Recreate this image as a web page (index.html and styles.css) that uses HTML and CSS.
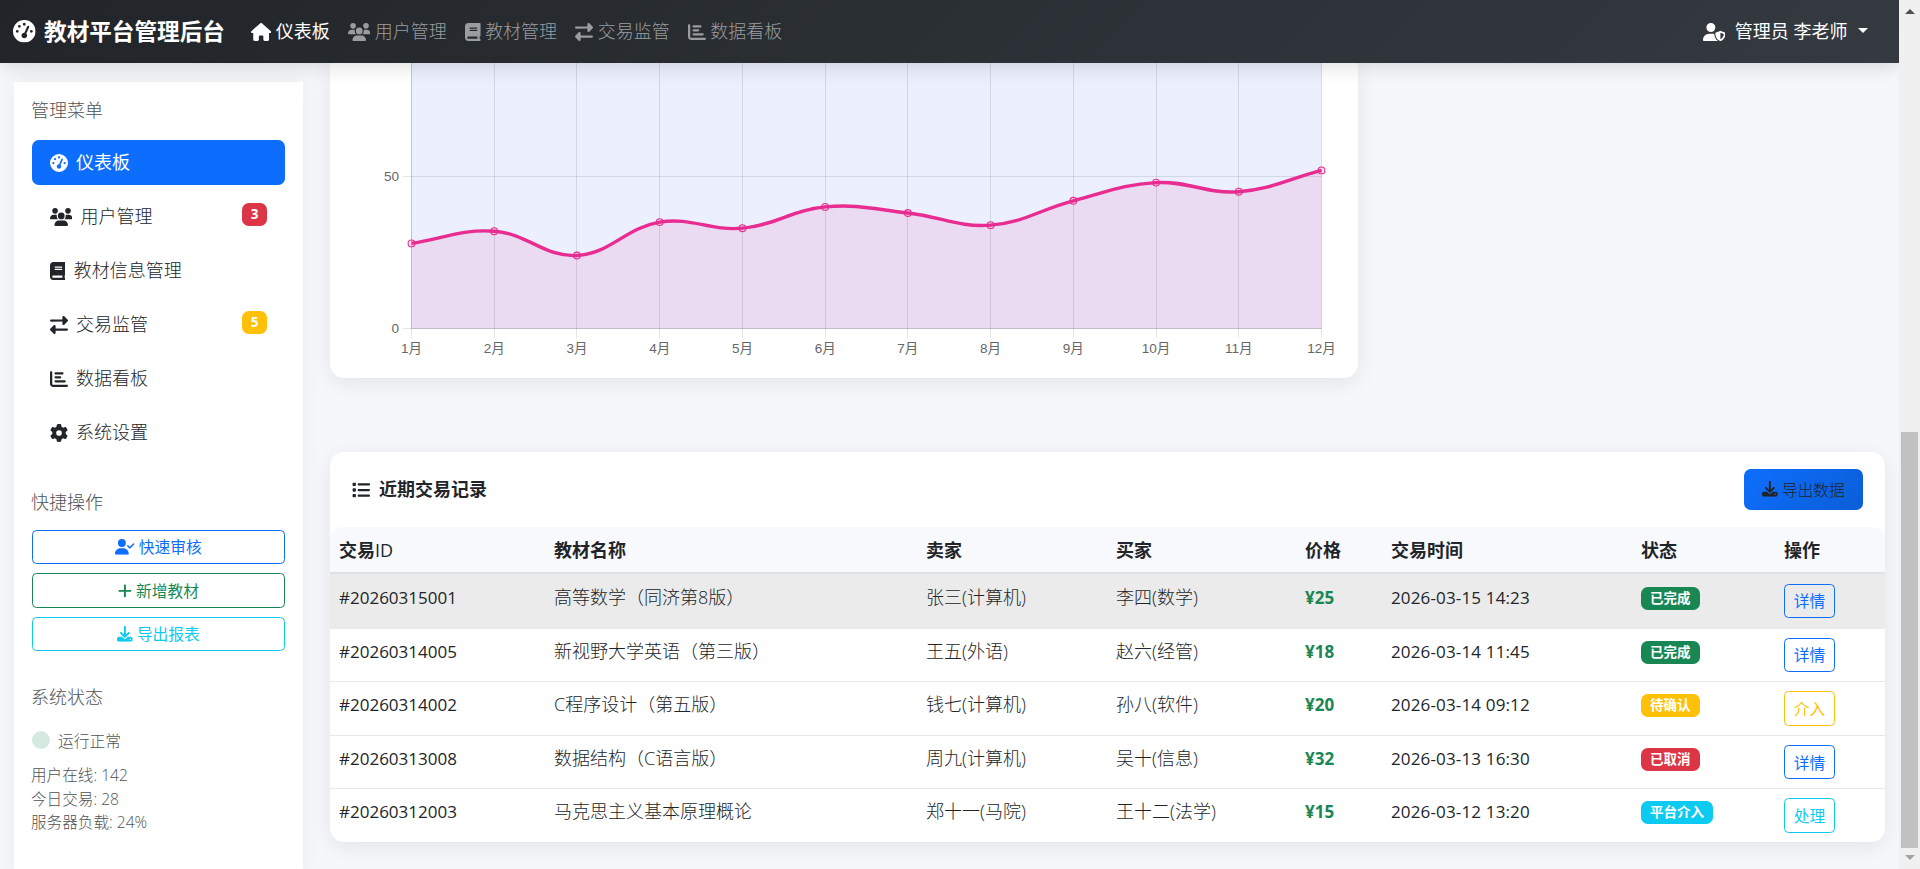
FILE: index.html
```html
<!DOCTYPE html>
<html lang="zh-CN">
<head>
    <meta charset="UTF-8">
    <meta name="viewport" content="width=device-width, initial-scale=1.0">
    <title>教材平台管理后台</title>
    <link rel="stylesheet" href="styles.css">
</head>
<body>

    <!-- Icon set -->
    <svg class="icon-set" aria-hidden="true">
        <symbol id="i-gauge" viewBox="0 0 512 512"><path d="M0 256a256 256 0 1 1 512 0A256 256 0 1 1 0 256zM288 96a32 32 0 1 0 -64 0 32 32 0 1 0 64 0zM256 416c35.3 0 64-28.7 64-64c0-17.4-6.9-33.1-18.1-44.6L366 161.7c5.3-12.1-.2-26.3-12.3-31.6s-26.3 .2-31.6 12.3L257.9 288c-.6 0-1.3 0-1.9 0c-35.3 0-64 28.7-64 64s28.7 64 64 64zM176 144a32 32 0 1 0 -64 0 32 32 0 1 0 64 0zM96 288a32 32 0 1 0 0-64 32 32 0 1 0 0 64zm352-32a32 32 0 1 0 -64 0 32 32 0 1 0 64 0z"/></symbol>
        <symbol id="i-home" viewBox="0 0 576 512"><path d="M575.8 255.5c0 18-15 32.1-32 32.1l-32 0 .7 160.2c0 2.7-.2 5.4-.5 8.1l0 16.2c0 22.1-17.9 40-40 40l-16 0c-1.1 0-2.2 0-3.3-.1c-1.4 .1-2.8 .1-4.2 .1L416 512l-24 0c-22.1 0-40-17.9-40-40l0-24 0-64c0-17.7-14.3-32-32-32l-64 0c-17.7 0-32 14.3-32 32l0 64 0 24c0 22.1-17.9 40-40 40l-24 0-31.9 0c-1.5 0-3-.1-4.5-.2c-1.2 .1-2.4 .2-3.6 .2l-16 0c-22.1 0-40-17.9-40-40l0-112c0-.9 0-1.9 .1-2.8l0-69.7-32 0c-18 0-32-14-32-32.1c0-9 3-17 10-24L266.4 8c7-7 15-8 22-8s15 2 21 7L564.8 231.5c8 7 12 15 11 24z"/></symbol>
        <symbol id="i-users" viewBox="0 0 640 512"><path d="M144 0a80 80 0 1 1 0 160A80 80 0 1 1 144 0zM512 0a80 80 0 1 1 0 160A80 80 0 1 1 512 0zM0 298.7C0 239.8 47.8 192 106.7 192l42.7 0c15.9 0 31 3.5 44.6 9.7c-1.3 7.2-1.9 14.7-1.9 22.3c0 38.2 16.8 72.5 43.3 96c-.2 0-.4 0-.7 0L21.3 320C9.6 320 0 310.4 0 298.7zM405.3 320c-.2 0-.4 0-.7 0c26.6-23.5 43.3-57.8 43.3-96c0-7.6-.7-15-1.9-22.3c13.6-6.3 28.7-9.7 44.6-9.7l42.7 0C592.2 192 640 239.8 640 298.7c0 11.8-9.6 21.3-21.3 21.3l-213.3 0zM224 224a96 96 0 1 1 192 0 96 96 0 1 1 -192 0zM128 485.3C128 411.7 187.7 352 261.3 352l117.3 0C452.3 352 512 411.7 512 485.3c0 14.7-11.9 26.7-26.7 26.7l-330.7 0c-14.7 0-26.7-11.9-26.7-26.7z"/></symbol>
        <symbol id="i-book" viewBox="0 0 448 512"><path d="M96 0C43 0 0 43 0 96L0 416c0 53 43 96 96 96l288 0 32 0c17.7 0 32-14.3 32-32s-14.3-32-32-32l0-64c17.7 0 32-14.3 32-32l0-320c0-17.7-14.3-32-32-32L384 0 96 0zm0 384l256 0 0 64L96 448c-17.7 0-32-14.3-32-32s14.3-32 32-32zm32-240c0-8.8 7.2-16 16-16l192 0c8.8 0 16 7.2 16 16s-7.2 16-16 16l-192 0c-8.8 0-16-7.2-16-16zm16 48l192 0c8.8 0 16 7.2 16 16s-7.2 16-16 16l-192 0c-8.8 0-16-7.2-16-16s7.2-16 16-16z"/></symbol>
        <symbol id="i-exchange" viewBox="0 0 512 512"><path d="M32 96l320 0 0-64c0-12.9 7.8-24.6 19.8-29.6s25.7-2.2 34.9 6.9l96 96c6 6 9.4 14.1 9.4 22.6s-3.4 16.6-9.4 22.6l-96 96c-9.2 9.2-22.9 11.9-34.9 6.9s-19.8-16.6-19.8-29.6l0-64L32 160c-17.7 0-32-14.3-32-32s14.3-32 32-32zM480 352c17.7 0 32 14.3 32 32s-14.3 32-32 32l-320 0 0 64c0 12.9-7.8 24.6-19.8 29.6s-25.7 2.2-34.9-6.9l-96-96c-6-6-9.4-14.1-9.4-22.6s3.4-16.6 9.4-22.6l96-96c9.2-9.2 22.9-11.9 34.9-6.9s19.8 16.6 19.8 29.6l0 64 320 0z"/></symbol>
        <symbol id="i-chart" viewBox="0 0 512 512"><path d="M32 32c17.7 0 32 14.3 32 32l0 336c0 8.8 7.2 16 16 16l400 0c17.7 0 32 14.3 32 32s-14.3 32-32 32L80 480c-44.2 0-80-35.8-80-80L0 64C0 46.3 14.3 32 32 32zm96 64c0-17.7 14.3-32 32-32l192 0c17.7 0 32 14.3 32 32s-14.3 32-32 32l-192 0c-17.7 0-32-14.3-32-32zm32 80l128 0c17.7 0 32 14.3 32 32s-14.3 32-32 32l-128 0c-17.7 0-32-14.3-32-32s14.3-32 32-32zm0 112l256 0c17.7 0 32 14.3 32 32s-14.3 32-32 32l-256 0c-17.7 0-32-14.3-32-32s14.3-32 32-32z"/></symbol>
        <symbol id="i-cog" viewBox="0 0 512 512"><path d="M495.9 166.6c3.2 8.7 .5 18.4-6.4 24.6l-43.3 39.4c1.1 8.3 1.7 16.8 1.7 25.4s-.6 17.1-1.7 25.4l43.3 39.4c6.9 6.2 9.6 15.9 6.4 24.6c-4.4 11.9-9.7 23.3-15.8 34.3l-4.7 8.1c-6.6 11-14 21.4-22.1 31.2c-5.9 7.2-15.7 9.6-24.5 6.8l-55.7-17.7c-13.4 10.3-28.2 18.9-44 25.4l-12.5 57.1c-2 9.1-9 16.3-18.2 17.8c-13.8 2.3-28 3.5-42.5 3.5s-28.7-1.2-42.5-3.5c-9.2-1.5-16.2-8.7-18.2-17.8l-12.5-57.1c-15.8-6.5-30.6-15.1-44-25.4L83.1 425.9c-8.8 2.8-18.6 .3-24.5-6.8c-8.1-9.8-15.5-20.2-22.1-31.2l-4.7-8.1c-6.1-11-11.4-22.4-15.8-34.3c-3.2-8.7-.5-18.4 6.4-24.6l43.3-39.4C64.6 273.1 64 264.6 64 256s.6-17.1 1.7-25.4L22.4 191.2c-6.9-6.2-9.6-15.9-6.4-24.6c4.4-11.9 9.7-23.3 15.8-34.3l4.7-8.1c6.6-11 14-21.4 22.1-31.2c5.9-7.2 15.7-9.6 24.5-6.8l55.7 17.7c13.4-10.3 28.2-18.9 44-25.4l12.5-57.1c2-9.1 9-16.3 18.2-17.8C227.3 1.2 241.5 0 256 0s28.7 1.2 42.5 3.5c9.2 1.5 16.2 8.7 18.2 17.8l12.5 57.1c15.8 6.5 30.6 15.1 44 25.4l55.7-17.7c8.8-2.8 18.6-.3 24.5 6.8c8.1 9.8 15.5 20.2 22.1 31.2l4.7 8.1c6.1 11 11.4 22.4 15.8 34.3zM256 336a80 80 0 1 0 0-160 80 80 0 1 0 0 160z"/></symbol>
        <symbol id="i-user-check" viewBox="0 0 640 512"><path d="M96 128a128 128 0 1 1 256 0A128 128 0 1 1 96 128zM0 482.3C0 383.8 79.8 304 178.3 304l91.4 0C368.2 304 448 383.8 448 482.3c0 16.4-13.3 29.7-29.7 29.7L29.7 512C13.3 512 0 498.7 0 482.3zM625 177L497 305c-9.4 9.4-24.6 9.4-33.9 0l-64-64c-9.4-9.4-9.4-24.6 0-33.9s24.6-9.4 33.9 0l47 47L591 143c9.4-9.4 24.6-9.4 33.9 0s9.4 24.6 0 33.9z"/></symbol>
        <symbol id="i-plus" viewBox="0 0 448 512"><path d="M256 80c0-17.7-14.3-32-32-32s-32 14.3-32 32l0 144L48 224c-17.7 0-32 14.3-32 32s14.3 32 32 32l144 0 0 144c0 17.7 14.3 32 32 32s32-14.3 32-32l0-144 144 0c17.7 0 32-14.3 32-32s-14.3-32-32-32l-144 0 0-144z"/></symbol>
        <symbol id="i-download" viewBox="0 0 512 512"><path d="M288 32c0-17.7-14.3-32-32-32s-32 14.3-32 32l0 242.7-73.4-73.4c-12.5-12.5-32.8-12.5-45.3 0s-12.5 32.8 0 45.3l128 128c12.5 12.5 32.8 12.5 45.3 0l128-128c12.5-12.5 12.5-32.8 0-45.3s-32.8-12.5-45.3 0L288 274.7 288 32zM64 352c-35.3 0-64 28.7-64 64l0 32c0 35.3 28.7 64 64 64l384 0c35.3 0 64-28.7 64-64l0-32c0-35.3-28.7-64-64-64l-101.5 0-45.3 45.3c-25 25-65.5 25-90.5 0L165.5 352 64 352zm368 56a24 24 0 1 1 0 48 24 24 0 1 1 0-48z"/></symbol>
        <symbol id="i-user-shield" viewBox="0 0 640 512"><path d="M224 256A128 128 0 1 0 224 0a128 128 0 1 0 0 256zm-45.7 48C79.8 304 0 383.8 0 482.3C0 498.7 13.3 512 29.7 512l388.6 0c1.8 0 3.5-.2 5.3-.5c-76.3-55.1-99.8-141-103.1-200.2c-16.1-4.8-33.1-7.3-50.7-7.3l-91.4 0zm308.8-78.3l-120 48C358 277.4 352 286.2 352 296c0 63.3 25.9 168.8 134.8 214.2c5.9 2.5 12.6 2.5 18.5 0C614.1 464.8 640 359.3 640 296c0-9.8-6-18.6-15.1-22.3l-120-48c-5.7-2.3-12.1-2.3-17.8 0zM591.4 312c-3.9 50.7-27.2 116.7-95.4 149.7l0-187.8L591.4 312z"/></symbol>
        <symbol id="i-list" viewBox="0 0 512 512"><path d="M40 48C26.7 48 16 58.7 16 72l0 48c0 13.3 10.7 24 24 24l48 0c13.3 0 24-10.7 24-24l0-48c0-13.3-10.7-24-24-24L40 48zM192 64c-17.7 0-32 14.3-32 32s14.3 32 32 32l288 0c17.7 0 32-14.3 32-32s-14.3-32-32-32L192 64zm0 160c-17.7 0-32 14.3-32 32s14.3 32 32 32l288 0c17.7 0 32-14.3 32-32s-14.3-32-32-32l-288 0zm0 160c-17.7 0-32 14.3-32 32s14.3 32 32 32l288 0c17.7 0 32-14.3 32-32s-14.3-32-32-32l-288 0zM16 232l0 48c0 13.3 10.7 24 24 24l48 0c13.3 0 24-10.7 24-24l0-48c0-13.3-10.7-24-24-24l-48 0c-13.3 0-24 10.7-24 24zM40 368c-13.3 0-24 10.7-24 24l0 48c0 13.3 10.7 24 24 24l48 0c13.3 0 24-10.7 24-24l0-48c0-13.3-10.7-24-24-24l-48 0z"/></symbol>
    </svg>

    <div class="page">
        <!-- Navbar -->
        <nav class="navbar">
            <a class="brand"><svg class="icon"><use href="#i-gauge"/></svg>教材平台管理后台</a>
            <div class="nav-links">
                <a class="nav-link active"><svg class="icon wide-sm"><use href="#i-home"/></svg>仪表板</a>
                <a class="nav-link"><svg class="icon wide"><use href="#i-users"/></svg>用户管理</a>
                <a class="nav-link"><svg class="icon narrow"><use href="#i-book"/></svg>教材管理</a>
                <a class="nav-link"><svg class="icon"><use href="#i-exchange"/></svg>交易监管</a>
                <a class="nav-link"><svg class="icon"><use href="#i-chart"/></svg>数据看板</a>
            </div>
            <a class="admin"><svg class="icon wide"><use href="#i-user-shield"/></svg>管理员 李老师<span class="caret"></span></a>
        </nav>

        <div class="layout">
            <!-- Sidebar -->
            <aside class="sidebar">
                <h6 class="side-title">管理菜单</h6>
                <div class="menu">
                    <a class="menu-item active"><svg class="icon"><use href="#i-gauge"/></svg>仪表板</a>
                    <a class="menu-item"><svg class="icon wide"><use href="#i-users"/></svg>用户管理<span class="count red">3</span></a>
                    <a class="menu-item"><svg class="icon narrow"><use href="#i-book"/></svg>教材信息管理</a>
                    <a class="menu-item"><svg class="icon"><use href="#i-exchange"/></svg>交易监管<span class="count yellow">5</span></a>
                    <a class="menu-item"><svg class="icon"><use href="#i-chart"/></svg>数据看板</a>
                    <a class="menu-item"><svg class="icon"><use href="#i-cog"/></svg>系统设置</a>
                </div>

                <h6 class="side-title ops-title">快捷操作</h6>
                <div class="quick">
                    <button class="btn primary"><svg class="icon wide"><use href="#i-user-check"/></svg>快速审核</button>
                    <button class="btn success"><svg class="icon narrow"><use href="#i-plus"/></svg>新增教材</button>
                    <button class="btn info"><svg class="icon"><use href="#i-download"/></svg>导出报表</button>
                </div>

                <h6 class="side-title status-title">系统状态</h6>
                <div class="running"><span class="dot"></span>运行正常</div>
                <div class="stats">
                    <div>用户在线: 142</div>
                    <div>今日交易: 28</div>
                    <div>服务器负载: 24%</div>
                </div>
            </aside>

            <!-- Main content -->
            <main class="main">
                <section class="card chart-card">
                    <svg id="trend" class="chart" viewBox="0 0 1028 315"></svg>
                </section>

                <section class="card table-card">
                    <div class="card-head">
                        <h5 class="card-title"><svg class="icon"><use href="#i-list"/></svg>近期交易记录</h5>
                        <button class="export"><svg class="icon"><use href="#i-download"/></svg>导出数据</button>
                    </div>
                    <table class="table">
                        <colgroup>
                            <col class="c-id"><col class="c-book"><col class="c-seller"><col class="c-buyer">
                            <col class="c-price"><col class="c-time"><col class="c-status"><col class="c-op">
                        </colgroup>
                        <thead>
                            <tr><th>交易<span class="latin">ID</span></th><th>教材名称</th><th>卖家</th><th>买家</th><th>价格</th><th>交易时间</th><th>状态</th><th>操作</th></tr>
                        </thead>
                        <tbody>
                            <tr class="hovered">
                                <td class="num">#20260315001</td><td>高等数学（同济第8版）</td><td>张三(计算机)</td><td>李四(数学)</td><td class="price">¥25</td><td class="num time">2026-03-15 14:23</td>
                                <td><span class="badge green">已完成</span></td><td><button class="btn primary">详情</button></td>
                            </tr>
                            <tr>
                                <td class="num">#20260314005</td><td>新视野大学英语（第三版）</td><td>王五(外语)</td><td>赵六(经管)</td><td class="price">¥18</td><td class="num time">2026-03-14 11:45</td>
                                <td><span class="badge green">已完成</span></td><td><button class="btn primary">详情</button></td>
                            </tr>
                            <tr>
                                <td class="num">#20260314002</td><td>C程序设计（第五版）</td><td>钱七(计算机)</td><td>孙八(软件)</td><td class="price">¥20</td><td class="num time">2026-03-14 09:12</td>
                                <td><span class="badge yellow">待确认</span></td><td><button class="btn warning">介入</button></td>
                            </tr>
                            <tr>
                                <td class="num">#20260313008</td><td>数据结构（C语言版）</td><td>周九(计算机)</td><td>吴十(信息)</td><td class="price">¥32</td><td class="num time">2026-03-13 16:30</td>
                                <td><span class="badge red">已取消</span></td><td><button class="btn primary">详情</button></td>
                            </tr>
                            <tr>
                                <td class="num">#20260312003</td><td>马克思主义基本原理概论</td><td>郑十一(马院)</td><td>王十二(法学)</td><td class="price">¥15</td><td class="num time">2026-03-12 13:20</td>
                                <td><span class="badge cyan">平台介入</span></td><td><button class="btn info">处理</button></td>
                            </tr>
                        </tbody>
                    </table>
                </section>
            </main>
        </div>
    </div>

    <!-- Scroll bar -->
    <div class="scrollbar">
        <span class="arrow up"></span>
        <span class="thumb"></span>
        <span class="arrow down"></span>
    </div>

    <script src="script.js"></script>
</body>
</html>
```
FILE: styles.css
```css
* {
    margin: 0;
    padding: 0;
    box-sizing: border-box;
}

body {
    font-family: "Open Sans", "Noto Sans CJK SC", sans-serif;
    font-size: 18px;
    font-weight: 300;
    line-height: 27px;
    color: #212529;
    background-color: #f5f7fb;
    display: flex;
    height: 869px;
    overflow: hidden;
}

button {
    font-family: inherit;
    font-weight: inherit;
    cursor: pointer;
}

.icon-set {
    display: none;
}

.icon {
    width: 1em;
    height: 1em;
    fill: currentColor;
    flex-shrink: 0;
}

.icon.wide {
    width: 1.25em;
}

.icon.wide-sm {
    width: 1.125em;
}

.icon.narrow {
    width: 0.875em;
}

.page {
    flex: 1;
    min-width: 0;
    height: 869px;
    overflow: hidden;
}

/* Navbar */
.navbar {
    position: relative;
    z-index: 10;
    display: flex;
    align-items: center;
    height: 63px;
    padding: 0 31px 0 13px;
    background: linear-gradient(135deg, #212529 0%, #343a40 100%);
    box-shadow: 0 4px 18px rgba(0, 0, 0, 0.13);
    color: #fff;
}

.brand {
    display: flex;
    align-items: center;
    gap: 8.5px;
    font-size: 22.6px;
    font-weight: 700;
}

.nav-links {
    display: flex;
    gap: 18px;
    margin-left: 26px;
}

.nav-link {
    display: flex;
    align-items: center;
    gap: 4.6px;
    color: #9a9c9e;
}

.nav-link.active {
    color: #fff;
    font-weight: 400;
}

.admin {
    display: flex;
    align-items: center;
    margin-left: auto;
    font-weight: 400;
}

.admin .icon {
    margin-right: 9.5px;
}

.caret {
    margin: 0 0 2px 10.5px;
    border-top: 5px solid #fff;
    border-left: 5px solid transparent;
    border-right: 5px solid transparent;
}

.layout {
    display: flex;
    align-items: flex-start;
    gap: 27px;
    padding: 0 14px;
}

/* Sidebar */
.sidebar {
    width: 289px;
    height: 800px;
    margin-top: 19px;
    padding: 15px 18px;
    background-color: #fff;
    box-shadow: 0 0 22px rgba(0, 0, 0, 0.05);
}

.side-title {
    margin-left: -1px;
    font-size: 18px;
    font-weight: 300;
    color: #4f5356;
}

.menu {
    margin-top: 16px;
}

.menu-item {
    display: flex;
    align-items: center;
    gap: 8.5px;
    height: 45px;
    margin-bottom: 9px;
    padding: 0 18px 0 17.5px;
    border-radius: 6.75px;
}

.menu-item.active {
    background-color: #0d6efd;
    color: #fff;
    font-weight: 400;
}

.count {
    width: 25px;
    height: 23px;
    margin: 0 0 4px auto;
    border-radius: 6.75px;
    font-size: 13.5px;
    font-weight: 700;
    line-height: 22px;
    text-align: center;
    color: #fff;
}

.red {
    background-color: #dc3545;
}

.yellow {
    background-color: #ffc107;
}

.green {
    background-color: #198754;
}

.cyan {
    background-color: #0dcaf0;
}

.ops-title {
    margin-top: 33.5px;
}

.quick {
    display: flex;
    flex-direction: column;
    gap: 9px;
    margin-top: 14px;
}

.btn {
    display: flex;
    align-items: center;
    justify-content: center;
    gap: 4px;
    height: 34.6px;
    background: transparent;
    border: 1px solid currentColor;
    border-radius: 4.5px;
    font-size: 15.75px;
    font-weight: 400;
}

.primary {
    color: #0d6efd;
}

.success {
    color: #198754;
}

.info {
    color: #0dcaf0;
}

.warning {
    color: #ffc107;
}

.status-title {
    margin-top: 33px;
}

.running {
    display: flex;
    align-items: center;
    gap: 8px;
    margin-top: 17px;
    font-size: 15.75px;
    color: #4f5356;
}

.dot {
    width: 18px;
    height: 18px;
    margin-bottom: 4px;
    border-radius: 50%;
    background-color: #d6e9e0;
}

.stats {
    margin: 9px 0 0 -1px;
    font-size: 15.6px;
    line-height: 23.6px;
    color: #4f5356;
}

/* Cards */
.main {
    width: 1555px;
}

.card {
    background-color: #fff;
    border-radius: 13.5px;
    box-shadow: 0 5px 22px rgba(0, 0, 0, 0.08);
}

.chart-card {
    width: 1028px;
    height: 315px;
    border-top-left-radius: 0;
    border-top-right-radius: 0;
}

.chart {
    display: block;
    width: 1028px;
    height: 315px;
}

.chart text {
    font-family: "Liberation Sans", "Noto Sans CJK SC", sans-serif;
    font-size: 13.5px;
    font-weight: 400;
    fill: #666;
}

.grid-line {
    stroke: rgba(0, 0, 0, 0.1);
}

.trend-line {
    fill: none;
    stroke: #e82c91;
    stroke-width: 3.4;
}

.trend-point {
    fill: rgba(232, 44, 145, 0.1);
    stroke: #e82c91;
    stroke-width: 1.1;
}

.area-blue {
    fill: #ebeffe;
}

.area-pink {
    fill: #ebdbf2;
}

.table-card {
    margin-top: 73.7px;
    height: 390px;
    overflow: hidden;
}

.card-head {
    display: flex;
    align-items: center;
    justify-content: space-between;
    height: 75px;
    padding: 0 22px;
}

.card-title {
    display: flex;
    align-items: center;
    gap: 9px;
    padding-top: 1px;
    font-size: 18px;
    font-weight: 600;
}

.export {
    display: flex;
    align-items: center;
    justify-content: center;
    gap: 4px;
    width: 119px;
    height: 41px;
    border: 0;
    border-radius: 6.75px;
    background: linear-gradient(135deg, #0d6efd 0%, #0b5ed7 100%);
    font-size: 15.75px;
    color: #212529;
}

/* Table */
.table {
    width: 1555px;
    table-layout: fixed;
    border-collapse: separate;
    border-spacing: 0;
}

.c-id { width: 215px; }
.c-book { width: 372px; }
.c-seller { width: 190px; }
.c-buyer { width: 189px; }
.c-price { width: 86px; }
.c-time { width: 250px; }
.c-status { width: 143px; }
.c-op { width: 110px; }

.table th {
    height: 47px;
    padding: 2px 9px 0;
    text-align: left;
    font-weight: 600;
    background-color: #f8f9fc;
    border-bottom: 2px solid #dee2e6;
}

.table th:first-child {
    border-top-left-radius: 12px;
}

.table th:last-child {
    border-top-right-radius: 12px;
}

.latin {
    font-weight: 400;
}

.table td {
    height: 53.6px;
    padding: 9px 9px 0;
    vertical-align: top;
    border-bottom: 1px solid #e6e8ea;
}

.table .hovered td {
    height: 55px;
    padding-top: 10px;
    background-color: #ebebeb;
    border-bottom-color: #ebebeb;
}

.table tr:last-child td {
    border-bottom: 0;
}

.table .num {
    font-size: 17px;
    font-weight: 400;
}

.table .time {
    letter-spacing: 0.15px;
}

.table .price {
    font-size: 17px;
    font-weight: 700;
    color: #198754;
}

.badge {
    display: block;
    width: fit-content;
    height: 23px;
    margin-top: 3px;
    padding: 0 9px;
    border-radius: 6.75px;
    font-size: 13.5px;
    font-weight: 700;
    line-height: 23px;
    color: #fff;
}

.table .btn {
    width: 51px;
}

/* Scroll bar */
.scrollbar {
    display: flex;
    flex-direction: column;
    align-items: center;
    width: 21px;
    height: 869px;
    padding: 9px 0;
    background-color: #f0f0f0;
}

.arrow {
    border-left: 5px solid transparent;
    border-right: 5px solid transparent;
}

.up {
    border-bottom: 5px solid #505050;
}

.down {
    margin-top: 7px;
    border-top: 5px solid #a3a3a3;
}

.thumb {
    width: 17px;
    height: 416px;
    margin-top: 418px;
    background-color: #c1c1c1;
}
```
FILE: script.js
```js
const data = [28, 32, 24, 35, 33, 40, 38, 34, 42, 48, 45, 52];
const left = 81.5, right = 991.5, bottom = 265.5;
const step = (right - left) / (data.length - 1);
const unit = 3.04;
const points = data.map((v, i) => ({ x: left + i * step, y: bottom - v * unit }));

// Smooth curve, tension 0.4
function controls(prev, cur, next) {
    const d1 = Math.hypot(cur.x - prev.x, cur.y - prev.y);
    const d2 = Math.hypot(next.x - cur.x, next.y - cur.y);
    const total = (d1 + d2) || 1;
    const fa = 0.4 * d1 / total;
    const fb = 0.4 * d2 / total;
    return {
        inX: cur.x - fa * (next.x - prev.x), inY: cur.y - fa * (next.y - prev.y),
        outX: cur.x + fb * (next.x - prev.x), outY: cur.y + fb * (next.y - prev.y)
    };
}

const ctrl = points.map((p, i) => controls(points[i - 1] || p, p, points[i + 1] || p));
let line = `M${points[0].x} ${points[0].y}`;
for (let i = 1; i < points.length; i++) {
    const a = ctrl[i - 1], b = ctrl[i];
    line += `C${a.outX} ${a.outY} ${b.inX} ${b.inY} ${points[i].x} ${points[i].y}`;
}

let svg = `<rect class="area-blue" x="${left}" y="0" width="${right - left}" height="${bottom}"/>`;
svg += `<path class="area-pink" d="${line}L${right} ${bottom}L${left} ${bottom}Z"/>`;

// Grid and month labels
points.forEach((p, i) => {
    const x = Math.floor(p.x) + 0.5;
    svg += `<line class="grid-line" x1="${x}" y1="0" x2="${x}" y2="275"/>`;
    svg += `<text x="${p.x}" y="290" text-anchor="middle">${i + 1}月</text>`;
});
[0, 50].forEach(v => {
    const y = Math.floor(bottom - v * unit) + 0.5;
    svg += `<line class="grid-line" x1="73" y1="${y}" x2="${right}" y2="${y}"/>`;
    svg += `<text x="69" y="${y + 4}" text-anchor="end">${v}</text>`;
});
svg += `<line class="grid-line" x1="${left}" y1="0" x2="${left}" y2="${bottom}"/>`;
svg += `<line class="grid-line" x1="${left}" y1="${bottom}" x2="${right}" y2="${bottom}"/>`;

svg += `<path class="trend-line" d="${line}"/>`;
points.forEach(p => {
    svg += `<circle class="trend-point" cx="${p.x}" cy="${p.y}" r="3.4"/>`;
});

document.getElementById('trend').innerHTML = svg;
```
